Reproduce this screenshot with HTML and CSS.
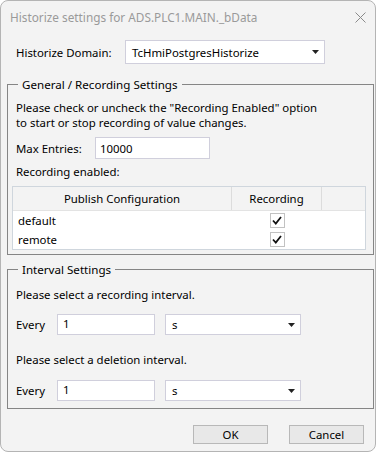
FILE: index.html
```html
<!DOCTYPE html>
<html>
<head>
<meta charset="utf-8">
<link rel="stylesheet" href="styles.css">
</head>
<body>
<div class="window">
  <div class="titlebar">
    <span class="title">Historize settings for ADS.PLC1.MAIN._bData</span>
    <svg class="close" width="11" height="11" viewBox="0 0 11 11"><path d="M0.5 0.5 L10.5 10.5 M10.5 0.5 L0.5 10.5" stroke="#8a8a8a" stroke-width="1" fill="none"/></svg>
  </div>
  <div class="content">
    <div class="domain-row">
      <span class="label domain-label">Historize Domain:</span>
      <div class="combo domain-combo">
        <span class="combo-text">TcHmiPostgresHistorize</span>
        <svg class="arrow" width="7" height="4" viewBox="0 0 7 4"><path d="M0 0 H7 L3.5 4 Z" fill="#222"/></svg>
      </div>
    </div>

    <fieldset class="group group-general">
      <legend>General / Recording Settings</legend>
      <p class="text intro">Please check or uncheck the "Recording Enabled" option<br>to start or stop recording of value changes.</p>
      <div class="field-row max-row">
        <span class="label max-label">Max Entries:</span>
        <div class="textbox max-box">10000</div>
      </div>
      <p class="text rec-label">Recording enabled:</p>
      <div class="grid">
        <div class="grid-head">
          <div class="hc c1">Publish Configuration</div>
          <div class="hc c2">Recording</div>
          <div class="hc c3"></div>
        </div>
        <div class="grid-row">
          <div class="cell c1">default</div>
          <div class="cell c2"><span class="check"><svg width="10" height="9" viewBox="0 0 10 9"><path d="M1 4.5 L3.8 7.5 L9 1" stroke="#111" stroke-width="1.8" fill="none"/></svg></span></div>
        </div>
        <div class="grid-row">
          <div class="cell c1">remote</div>
          <div class="cell c2"><span class="check"><svg width="10" height="9" viewBox="0 0 10 9"><path d="M1 4.5 L3.8 7.5 L9 1" stroke="#111" stroke-width="1.8" fill="none"/></svg></span></div>
        </div>
      </div>
    </fieldset>

    <fieldset class="group group-interval">
      <legend>Interval Settings</legend>
      <p class="text rec-int">Please select a recording interval.</p>
      <div class="field-row interval-row">
        <span class="label every">Every</span>
        <div class="textbox num-box">1</div>
        <div class="combo unit-combo">
          <span class="combo-text">s</span>
          <svg class="arrow" width="7" height="4" viewBox="0 0 7 4"><path d="M0 0 H7 L3.5 4 Z" fill="#222"/></svg>
        </div>
      </div>
      <p class="text del-int">Please select a deletion interval.</p>
      <div class="field-row interval-row second">
        <span class="label every">Every</span>
        <div class="textbox num-box">1</div>
        <div class="combo unit-combo">
          <span class="combo-text">s</span>
          <svg class="arrow" width="7" height="4" viewBox="0 0 7 4"><path d="M0 0 H7 L3.5 4 Z" fill="#222"/></svg>
        </div>
      </div>
    </fieldset>

    <div class="buttons">
      <div class="btn">OK</div>
      <div class="btn">Cancel</div>
    </div>
  </div>
</div>
</body>
</html>
```
FILE: styles.css
```css
* { box-sizing: border-box; }
html, body { margin: 0; padding: 0; background: #ffffff; }
body {
  font-family: "Noto Sans", "Open Sans", sans-serif;
  font-size: 11.4px;
  color: #000;
}
.window {
  width: 376px;
  height: 452px;
  border: 1px solid #b4b4b4;
  border-radius: 8px;
  background: #f3f3f3;
  overflow: hidden;
}
.titlebar {
  height: 32px;
  display: flex;
  align-items: center;
  justify-content: space-between;
  padding: 0 9px 0 9px;
}
.title {
  color: #9a9a9a;
  font-size: 11.8px;
  line-height: 16px;
}
.close { display: block; }
.content {
  padding: 7px 1px 0 6px;
}
.domain-row {
  display: flex;
  align-items: center;
  height: 24px;
  padding-left: 9px;
}
.domain-label { width: 109px; flex-shrink: 0; }
.combo {
  height: 24px;
  background: #fff;
  border: 1px solid #d0cfdc;
  display: flex;
  align-items: center;
  justify-content: space-between;
  padding: 0 5px 0 6px;
}
.domain-combo { width: 200px; }
.arrow { display: block; }

.group {
  margin: 0;
  border: 1px solid #858585;
  padding: 0 4px;
  min-width: 0;
}
.group legend {
  padding: 0 4px;
  margin-left: 6px;
  line-height: 15px;
  font-size: 11.6px;
}
.group-general { margin-top: 13px; padding-bottom: 4px; }
.group-interval { margin-top: 7px; padding-bottom: 7px; }

.text {
  margin: 0;
  line-height: 14.5px;
  padding-left: 4px;
}
.intro { margin-top: 9px; }
.field-row {
  display: flex;
  align-items: center;
  padding-left: 4px;
}
.max-row { margin-top: 7px; }
.max-label { width: 79px; flex-shrink: 0; }
.textbox {
  background: #fff;
  border: 1px solid #d0cfdc;
  display: flex;
  align-items: center;
  padding-left: 5px;
  color: #000;
}
.max-box { width: 115px; height: 22px; padding-left: 4px; }
.rec-label { margin-top: 5px; line-height: 15px; }

.grid {
  margin-top: 7px;
  margin-right: 3px;
  border: 1px solid #cfd6dd;
  background: #fff;
}
.grid-head {
  display: flex;
  height: 24px;
  background: #f3f3f3;
  border-bottom: 1px solid #e3e3e3;
}
.hc {
  display: flex;
  align-items: center;
  justify-content: center;
  border-right: 1px solid #dcdcdc;
}
.c1 { width: 219px; }
.c2 { width: 90px; }
.c3 { flex: 1; border-right: none; }
.grid-row {
  display: flex;
  height: 19px;
  align-items: center;
}
.cell.c1 { padding-left: 5px; }
.cell.c2 { display: flex; justify-content: center; }
.check {
  width: 15px;
  height: 15px;
  border: 1px solid #c2c2c2;
  background: #fff;
  display: flex;
  align-items: center;
  justify-content: center;
}
.check svg { display: block; }

.rec-int { margin-top: 10px; line-height: 15px; }
.interval-row { margin-top: 12px; }
.interval-row.second { margin-top: 13px; }
.del-int { margin-top: 17px; line-height: 15px; }
.every { width: 41px; flex-shrink: 0; }
.num-box { width: 98px; height: 21px; align-items: flex-start; line-height: 17px; }
.unit-combo { width: 136px; height: 21px; margin-left: 10px; }

.buttons {
  display: flex;
  justify-content: flex-end;
  gap: 21px;
  margin-top: 16px;
  padding-right: 10px;
}
.btn {
  width: 75px;
  height: 19px;
  border: 1px solid #b8b8b8;
  background: #e8e8e8;
  display: flex;
  align-items: center;
  justify-content: center;
}
```
